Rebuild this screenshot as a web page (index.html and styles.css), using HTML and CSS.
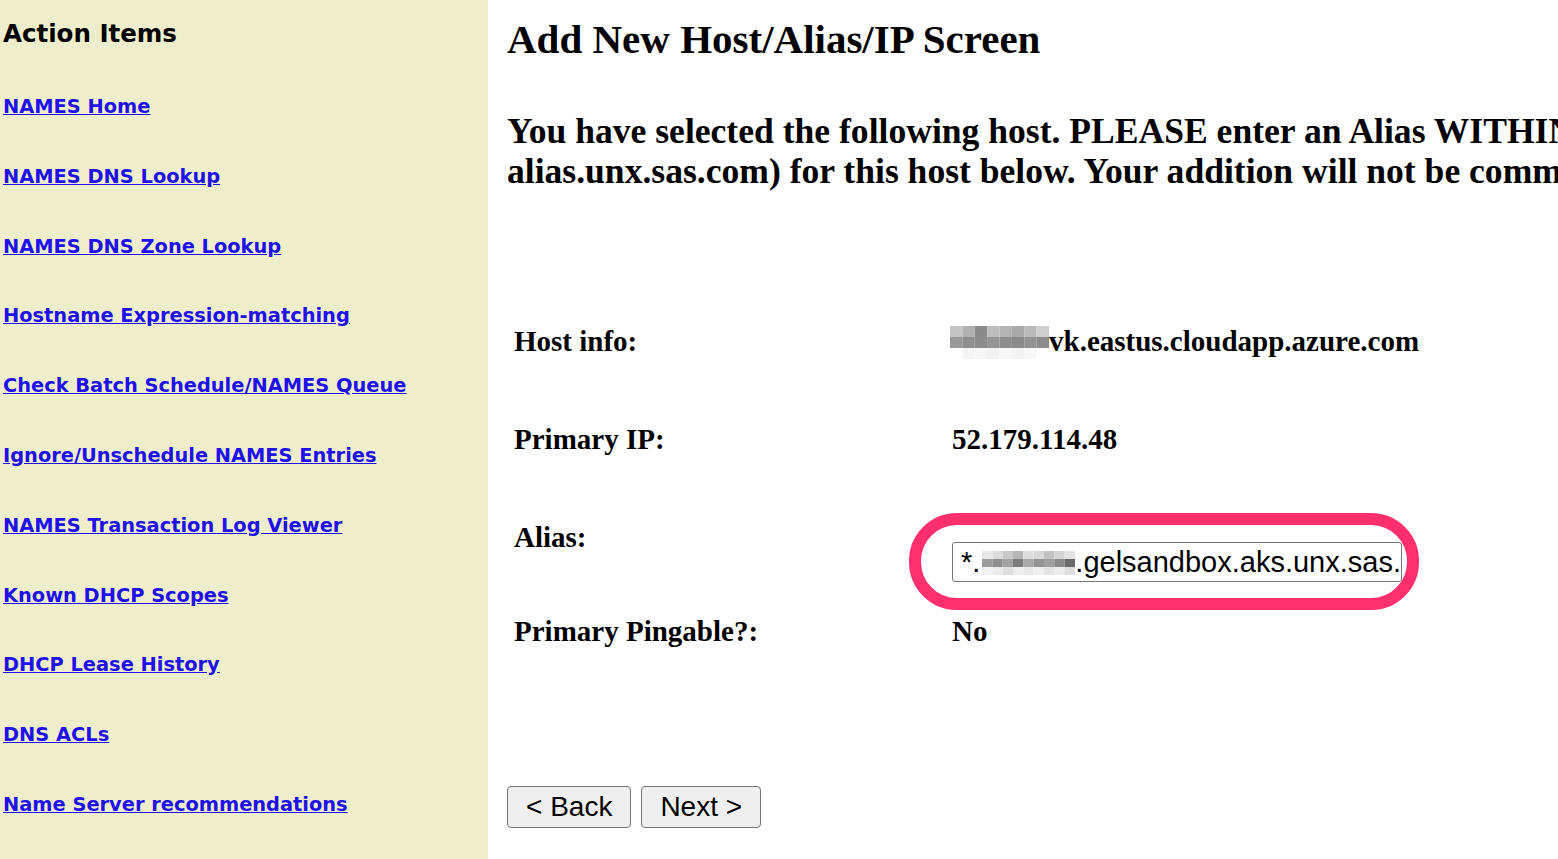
FILE: index.html
```html
<!DOCTYPE html>
<html lang="en">
<head>
<meta charset="utf-8">
<title>Add New Host/Alias/IP Screen</title>
<link rel="stylesheet" href="styles.css">
</head>
<body>
<div class="page">
  <nav class="sidebar">
    <h3 class="side-title">Action Items</h3>
    <ul class="side-links">
      <li><a href="#">NAMES Home</a></li>
      <li><a href="#">NAMES DNS Lookup</a></li>
      <li><a href="#">NAMES DNS Zone Lookup</a></li>
      <li><a href="#">Hostname Expression-matching</a></li>
      <li><a href="#">Check Batch Schedule/NAMES Queue</a></li>
      <li><a href="#">Ignore/Unschedule NAMES Entries</a></li>
      <li><a href="#">NAMES Transaction Log Viewer</a></li>
      <li><a href="#">Known DHCP Scopes</a></li>
      <li><a href="#">DHCP Lease History</a></li>
      <li><a href="#">DNS ACLs</a></li>
      <li><a href="#">Name Server recommendations</a></li>
    </ul>
  </nav>
  <main class="main">
    <h1 class="title">Add New Host/Alias/IP Screen</h1>
    <p class="intro">You have selected the following host. PLEASE enter an Alias WITHIN the unx.sas.com domain (e.g. my-<br>alias.unx.sas.com) for this host below. Your addition will not be committed until you confirm it on the next screen.</p>

    <div class="form-grid">
      <div class="label">Host info:</div>
      <div class="value"><svg class="mosaic mosaic-host" width="99" height="33" viewBox="0 0 8 3" preserveAspectRatio="none" aria-hidden="true">
        <rect x="0" y="0" width="1" height="1" fill="#c4c4c4"/><rect x="1" y="0" width="1" height="1" fill="#b0b0b0"/><rect x="2" y="0" width="1" height="1" fill="#8a8a8a"/><rect x="3" y="0" width="1" height="1" fill="#bdbdbd"/><rect x="4" y="0" width="1" height="1" fill="#b4b4b4"/><rect x="5" y="0" width="1" height="1" fill="#a9a9a9"/><rect x="6" y="0" width="1" height="1" fill="#bababa"/><rect x="7" y="0" width="1" height="1" fill="#cfcfcf"/>
        <rect x="0" y="1" width="1" height="1" fill="#9a9a9a"/><rect x="1" y="1" width="1" height="1" fill="#8f8f8f"/><rect x="2" y="1" width="1" height="1" fill="#8c8c8c"/><rect x="3" y="1" width="1" height="1" fill="#959595"/><rect x="4" y="1" width="1" height="1" fill="#8d8d8d"/><rect x="5" y="1" width="1" height="1" fill="#8a8a8a"/><rect x="6" y="1" width="1" height="1" fill="#939393"/><rect x="7" y="1" width="1" height="1" fill="#8c8c8c"/>
        <rect x="0" y="2" width="1" height="1" fill="#ffffff"/><rect x="1" y="2" width="1" height="1" fill="#f4f4f4"/><rect x="2" y="2" width="1" height="1" fill="#f6f6f6"/><rect x="3" y="2" width="1" height="1" fill="#f2f2f2"/><rect x="4" y="2" width="1" height="1" fill="#f7f7f7"/><rect x="5" y="2" width="1" height="1" fill="#f3f3f3"/><rect x="6" y="2" width="1" height="1" fill="#f8f8f8"/><rect x="7" y="2" width="1" height="1" fill="#ffffff"/>
      </svg>vk.eastus.cloudapp.azure.com</div>

      <div class="label">Primary IP:</div>
      <div class="value">52.179.114.48</div>

      <div class="label">Alias:</div>
      <div class="value alias-cell">
        <div class="text-input" role="textbox">*.<svg class="mosaic mosaic-alias" width="93" height="24" viewBox="0 0 9 3" preserveAspectRatio="none" aria-hidden="true">
          <rect x="0" y="0" width="1" height="1" fill="#e6e6e6"/><rect x="1" y="0" width="1" height="1" fill="#dcdcdc"/><rect x="2" y="0" width="1" height="1" fill="#c9c9c9"/><rect x="3" y="0" width="1" height="1" fill="#b6b6b6"/><rect x="4" y="0" width="1" height="1" fill="#dedede"/><rect x="5" y="0" width="1" height="1" fill="#d8d8d8"/><rect x="6" y="0" width="1" height="1" fill="#c2c2c2"/><rect x="7" y="0" width="1" height="1" fill="#d4d4d4"/><rect x="8" y="0" width="1" height="1" fill="#e4e4e4"/>
          <rect x="0" y="1" width="1" height="1" fill="#9c9c9c"/><rect x="1" y="1" width="1" height="1" fill="#8e8e8e"/><rect x="2" y="1" width="1" height="1" fill="#a2a2a2"/><rect x="3" y="1" width="1" height="1" fill="#7c7c7c"/><rect x="4" y="1" width="1" height="1" fill="#a8a8a8"/><rect x="5" y="1" width="1" height="1" fill="#939393"/><rect x="6" y="1" width="1" height="1" fill="#9f9f9f"/><rect x="7" y="1" width="1" height="1" fill="#8a8a8a"/><rect x="8" y="1" width="1" height="1" fill="#6a6a6a"/>
          <rect x="0" y="2" width="1" height="1" fill="#f2f2f2"/><rect x="1" y="2" width="1" height="1" fill="#ebebeb"/><rect x="2" y="2" width="1" height="1" fill="#e0e0e0"/><rect x="3" y="2" width="1" height="1" fill="#eeeeee"/><rect x="4" y="2" width="1" height="1" fill="#e8e8e8"/><rect x="5" y="2" width="1" height="1" fill="#f0f0f0"/><rect x="6" y="2" width="1" height="1" fill="#e5e5e5"/><rect x="7" y="2" width="1" height="1" fill="#ececec"/><rect x="8" y="2" width="1" height="1" fill="#dddddd"/>
        </svg>.gelsandbox.aks.unx.sas.com</div>
        <div class="highlight-ring" aria-hidden="true"></div>
      </div>

      <div class="label">Primary Pingable?:</div>
      <div class="value">No</div>
    </div>

    <div class="buttons">
      <button class="btn" type="button">&lt; Back</button>
      <button class="btn" type="button">Next &gt;</button>
    </div>
  </main>
</div>
</body>
</html>
```

FILE: styles.css
```css
html, body {
  margin: 0;
  padding: 0;
  background: #ffffff;
  overflow: hidden;
}

.page {
  display: flex;
  align-items: stretch;
  min-height: 859px;
  width: 1900px;
}

.sidebar {
  flex: none;
  width: 485px;
  padding-left: 3px;
  background: #eeeecc;
  font-family: "DejaVu Sans", Verdana, sans-serif;
}

.side-title {
  margin: 19px 0 0 0;
  font-size: 24.5px;
  font-weight: bold;
  color: #000000;
  line-height: normal;
}

.side-links {
  list-style: none;
  margin: 47px 0 0 0;
  padding: 0;
  display: flex;
  flex-direction: column;
  gap: 46.8px;
}

.side-links li {
  line-height: 23px;
  font-size: 19.4px;
  font-weight: bold;
}

.side-links a {
  color: #2010f0;
  text-decoration: underline;
}

.main {
  flex: none;
  width: 1380px;
  padding-left: 19px;
  font-family: "Liberation Serif", "Times New Roman", serif;
  color: #000000;
}

.title {
  margin: 16px 0 0 0;
  font-size: 41px;
  line-height: 46px;
  font-weight: bold;
}

.intro {
  margin: 49px 0 0 0;
  font-size: 35.6px;
  line-height: 40px;
  font-weight: bold;
  white-space: nowrap;
}

.form-grid {
  margin: 134px 0 0 7px;
  display: grid;
  grid-template-columns: 438px 1fr;
  grid-template-rows: 98px 98px 94px 33px;
  font-size: 29px;
  line-height: 33px;
  font-weight: bold;
}

.label,
.value {
  align-self: start;
  white-space: nowrap;
}

.mosaic {
  display: inline-block;
  vertical-align: -8px;
}

.mosaic-host {
  margin-left: -2px;
  margin-right: 0;
}

.alias-cell {
  position: relative;
  padding-top: 21px;
}

.text-input {
  box-sizing: border-box;
  width: 450px;
  height: 40px;
  border: 1px solid #767676;
  border-radius: 3px;
  background: #ffffff;
  padding: 0 0 0 8px;
  font-family: "Liberation Sans", Arial, sans-serif;
  font-size: 29px;
  font-weight: normal;
  line-height: 38px;
  white-space: nowrap;
  overflow: hidden;
}

.mosaic-alias {
  vertical-align: -3px;
  margin-left: 2px;
}

.highlight-ring {
  position: absolute;
  left: -43px;
  top: -8px;
  width: 486px;
  height: 73px;
  border: 12px solid #fe2f6d;
  border-radius: 48px;
  pointer-events: none;
}

.buttons {
  margin-top: 138px;
  display: flex;
  gap: 10px;
}

.btn {
  height: 42px;
  padding: 0 18px;
  border: 1px solid #767676;
  border-radius: 4px;
  background: #efefef;
  font-family: "Liberation Sans", Arial, sans-serif;
  font-size: 28px;
  color: #000000;
  line-height: 40px;
}
```
